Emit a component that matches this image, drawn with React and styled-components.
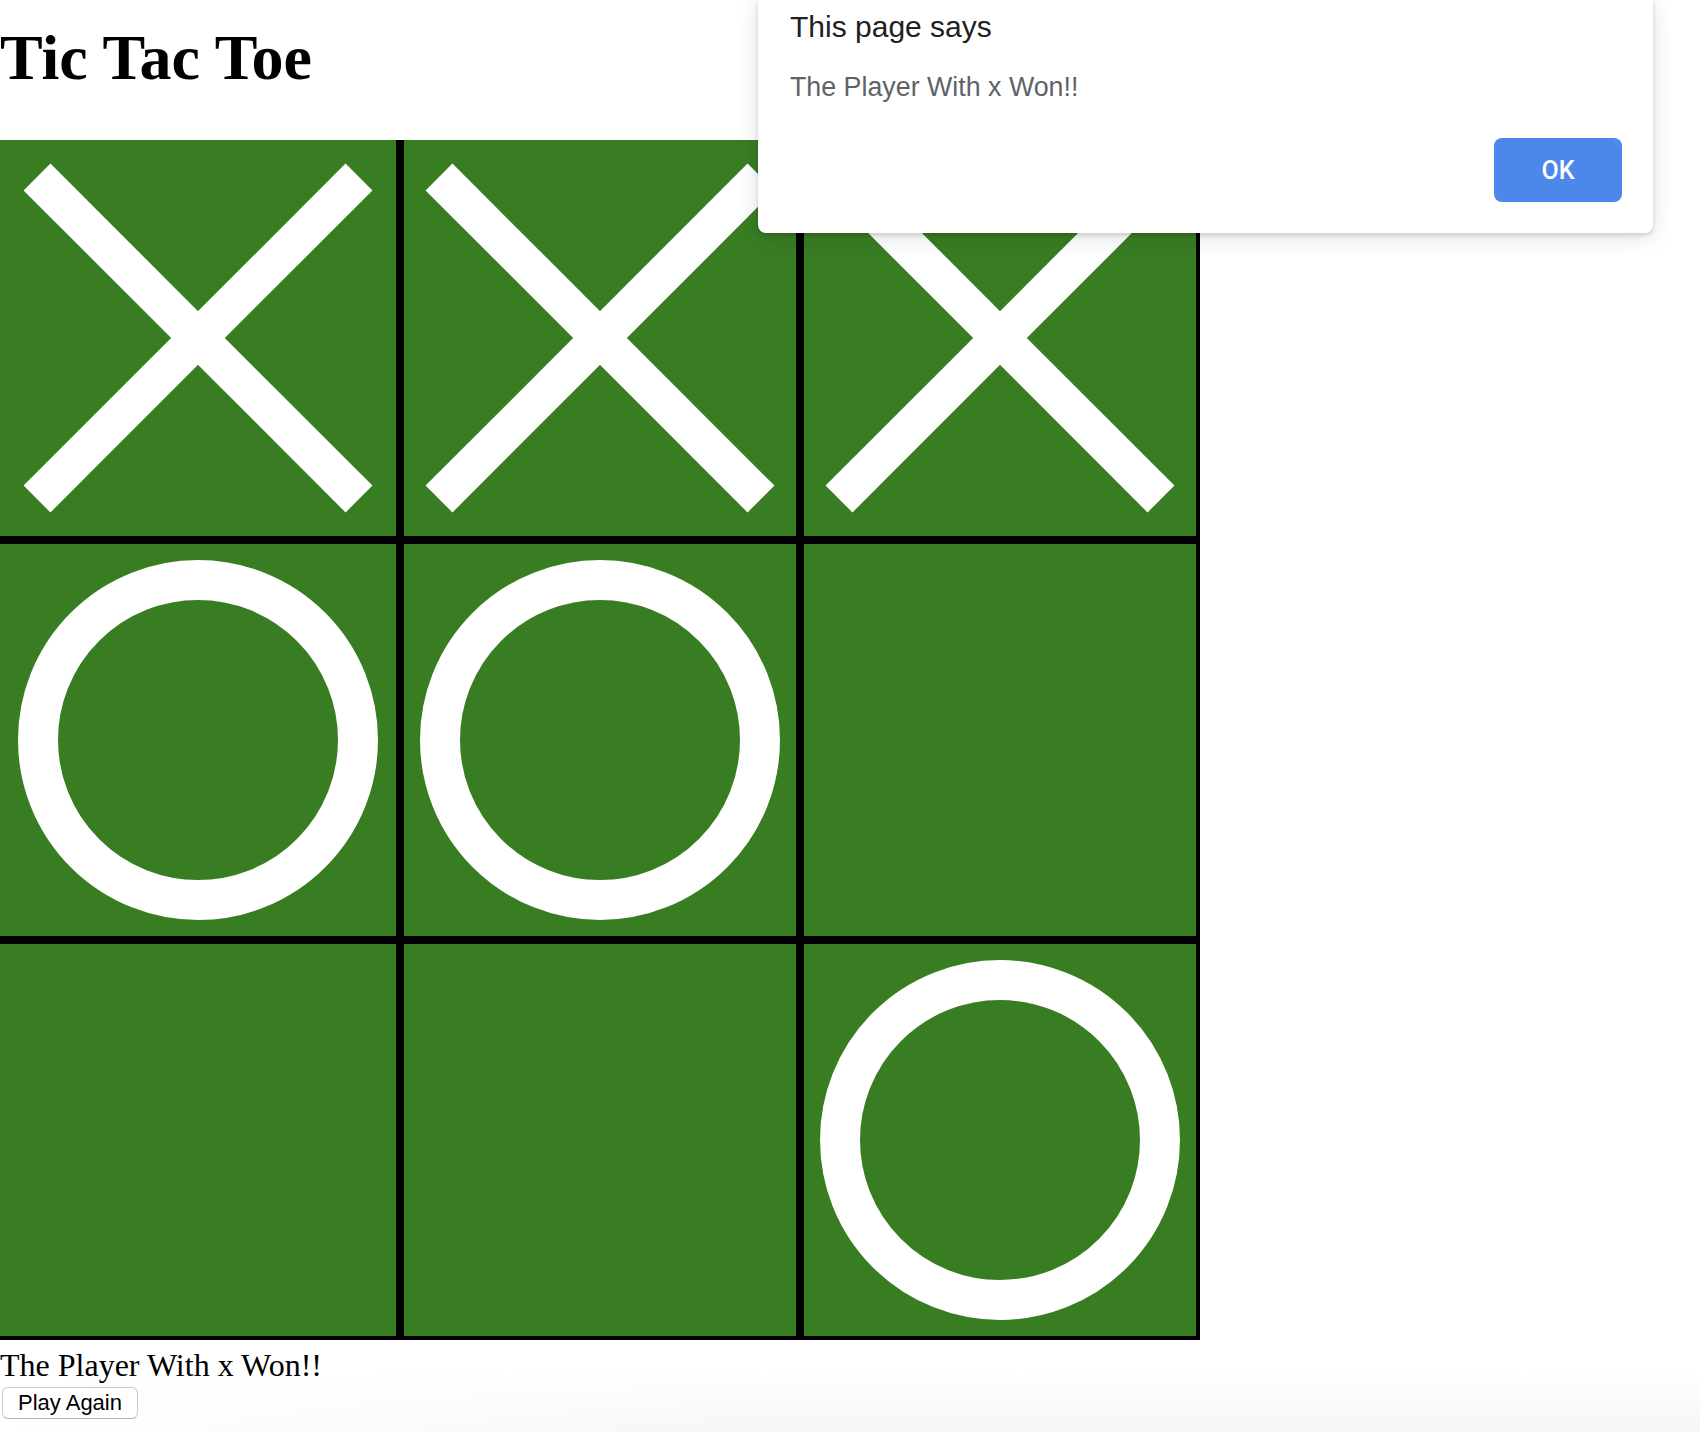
import React from "react";
import styled, { createGlobalStyle } from "styled-components";

const GlobalStyle = createGlobalStyle`
  html, body {
    margin: 0;
    padding: 0;
    background: #ffffff;
  }
  body {
    font-family: "Liberation Serif", "Times New Roman", serif;
    color: #000;
  }
`;

const Page = styled.div`
  position: relative;
  min-height: 1432px;
  overflow: hidden;
  background:
    linear-gradient(to right, #ffffff 0, rgba(255, 255, 255, 0) 760px),
    linear-gradient(to bottom, #ffffff 1372px, #f6f6f6 1432px);
`;

const Title = styled.h1`
  margin: 22px 0 46px;
  font-family: "Liberation Serif", "Times New Roman", serif;
  font-weight: 700;
  font-size: 64px;
  line-height: 72px;
`;

const Board = styled.div`
  display: grid;
  grid-template-columns: repeat(3, 400px);
  grid-template-rows: repeat(3, 400px);
  width: 1200px;
`;

const Cell = styled.div`
  box-sizing: border-box;
  display: flex;
  align-items: center;
  justify-content: center;
  background: #397d23;
  border-style: solid;
  border-color: #000;
  border-right-width: 4px;
  border-bottom-width: 4px;
  border-left-width: ${(p) => (p.$col > 0 ? 4 : 0)}px;
  border-top-width: ${(p) => (p.$row > 0 ? 4 : 0)}px;
`;

const Mark = styled.svg`
  display: block;
  width: 392px;
  height: 392px;
  flex: none;
`;

const Status = styled.div`
  margin: 7px 0 0;
  font-family: "Liberation Serif", "Times New Roman", serif;
  font-size: 32px;
  line-height: 37px;
`;

const PlayButton = styled.button`
  display: block;
  box-sizing: border-box;
  margin: 3px 0 0 2px;
  width: 136px;
  height: 32px;
  padding: 0;
  background: #ffffff;
  border: 1px solid #c9c9c9;
  border-bottom-color: #b5b5b5;
  border-radius: 6px;
  font-family: "Liberation Sans", Arial, sans-serif;
  font-size: 22px;
  color: #000;
  cursor: pointer;
`;

const Dialog = styled.div`
  position: absolute;
  top: 0;
  left: 758px;
  width: 895px;
  height: 233px;
  box-sizing: border-box;
  padding: 10px 31px 31px 32px;
  display: flex;
  flex-direction: column;
  background: #ffffff;
  border-radius: 0 0 8px 8px;
  box-shadow: 0 2px 4px rgba(0, 0, 0, 0.14), 0 4px 22px rgba(0, 0, 0, 0.13);
  font-family: "Liberation Sans", Arial, sans-serif;
`;

const DialogTitle = styled.div`
  font-size: 30px;
  line-height: 34px;
  color: #202124;
`;

const DialogMessage = styled.div`
  margin-top: 27px;
  font-size: 26.8px;
  line-height: 32px;
  color: #5f6368;
`;

const DialogActions = styled.div`
  margin-top: auto;
  display: flex;
  justify-content: flex-end;
`;

const OkButton = styled.button`
  width: 128px;
  height: 64px;
  border: none;
  border-radius: 8px;
  background: #4c88e9;
  color: #ffffff;
  font-family: Roboto, "Liberation Sans", Arial, sans-serif;
  font-weight: 500;
  font-size: 25px;
  cursor: pointer;
`;

const XMark = () => (
  <Mark viewBox="-196 -196 392 392">
    <g stroke="#ffffff" strokeWidth="38" strokeLinecap="butt">
      <line x1="-161" y1="-161" x2="161" y2="161" />
      <line x1="161" y1="-161" x2="-161" y2="161" />
    </g>
  </Mark>
);

const OMark = () => (
  <Mark viewBox="-196 -196 392 392">
    <circle cx="0" cy="0" r="160" fill="none" stroke="#ffffff" strokeWidth="40" />
  </Mark>
);

const board = ["x", "x", "x", "o", "o", "", "", "", "o"];

export default function App() {
  return (
    <Page>
      <GlobalStyle />
      <Title>Tic Tac Toe</Title>
      <Board>
        {board.map((v, i) => (
          <Cell key={i} $row={Math.floor(i / 3)} $col={i % 3}>
            {v === "x" && <XMark />}
            {v === "o" && <OMark />}
          </Cell>
        ))}
      </Board>
      <Status>The Player With x Won!!</Status>
      <PlayButton>Play Again</PlayButton>
      <Dialog>
        <DialogTitle>This page says</DialogTitle>
        <DialogMessage>The Player With x Won!!</DialogMessage>
        <DialogActions>
          <OkButton>OK</OkButton>
        </DialogActions>
      </Dialog>
    </Page>
  );
}
